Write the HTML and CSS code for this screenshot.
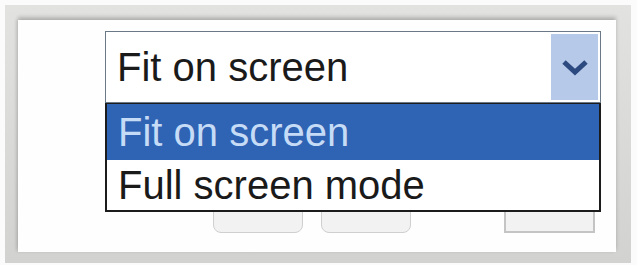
FILE: index.html
```html
<!DOCTYPE html>
<html>
<head>
<meta charset="utf-8">
<link rel="stylesheet" href="styles.css">
</head>
<body>
<div class="frame">
  <div class="panel">
    <div class="combo">
      <div class="select">
        <span class="value">Fit on screen</span>
        <span class="arrow">
          <svg width="28" height="18" viewBox="0 0 28 18"><path d="M3 4 L14 14 L25 4" fill="none" stroke="#2c4a80" stroke-width="5"/></svg>
        </span>
      </div>
      <ul class="list">
        <li class="opt selected">Fit on screen</li>
        <li class="opt">Full screen mode</li>
      </ul>
    </div>
    <div class="buttons">
      <span class="btn round b1"></span>
      <span class="btn round b2"></span>
      <span class="btn rect b3"></span>
    </div>
  </div>
</div>
</body>
</html>
```
FILE: styles.css
```css
html, body { margin: 0; padding: 0; background: #fbfbfb; }
body { width: 637px; height: 265px; overflow: hidden; }
.frame {
  margin: 5px 6px 2px 5px;
  padding: 15px 15px 11px 13px;
  background: linear-gradient(to bottom, #e2e2e0 0%, #d2d2d0 100%);
  height: 232px;
}
.panel {
  background: #fefefe;
  height: 232px;
  padding: 11px 0 0 87px;
  box-sizing: border-box;
  position: relative;
  box-shadow: 0 -3px 4px rgba(0,0,0,0.2), -2px 0 3px rgba(0,0,0,0.08);
}
.combo { position: relative; width: 496px; }
.select {
  height: 72px;
  border: 1px solid #6a7888;
  box-sizing: border-box;
  display: flex;
  align-items: center;
  justify-content: space-between;
  padding: 2px 2px 2px 11px;
  background: #fff;
  font-family: "Liberation Sans", Arial, sans-serif;
  font-size: 40px;
  color: #1a1a1a;
}
.arrow {
  width: 47px;
  align-self: stretch;
  background: #b7c9e8;
  display: flex;
  align-items: center;
  justify-content: center;
}
.list {
  position: absolute;
  left: 0;
  top: 72px;
  width: 496px;
  box-sizing: border-box;
  margin: 0;
  padding: 0;
  list-style: none;
  border: 2px solid #1c1c1c;
  border-top: 1px solid #1c1c1c;
  background: #fff;
  font-family: "Liberation Sans", Arial, sans-serif;
  font-size: 40px;
  z-index: 2;
}
.opt {
  height: 50px;
  line-height: 50px;
  padding-left: 11px;
  color: #1a1a1a;
}
.opt.selected {
  height: 56px;
  line-height: 56px;
  background: #2f63b3;
  color: #c6dcf6;
}
.buttons {
  display: flex;
  padding-left: 108px;
  margin-top: 102px;
  gap: 18px;
}
.btn {
  height: 28px;
  background: #f2f2f2;
  border: 1px solid #cfcfcf;
  box-sizing: border-box;
}
.round { width: 90px; border-radius: 0 0 8px 8px; }
.rect { width: 91px; margin-left: 75px; border: 2px solid #c4c4c4; }
```
